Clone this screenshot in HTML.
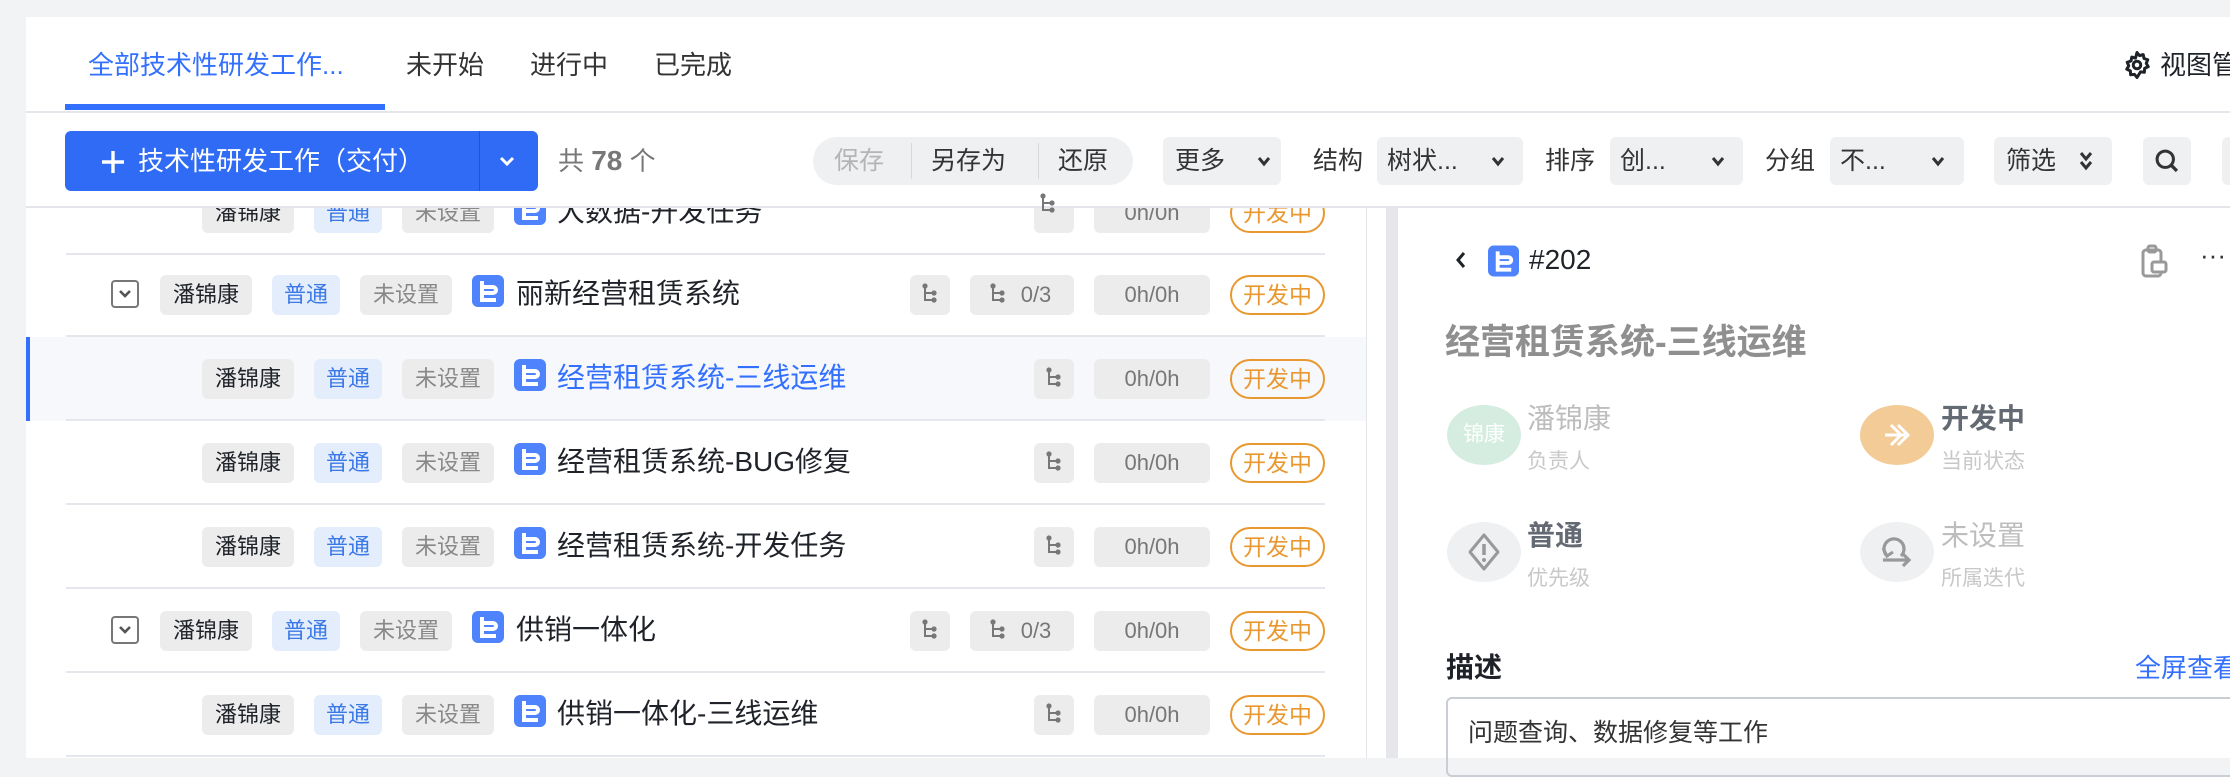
<!DOCTYPE html>
<html><head><meta charset="utf-8">
<style>
*{margin:0;padding:0;box-sizing:border-box}
body{width:2230px;height:758px;overflow:hidden;background:#f2f3f5;font-family:"Liberation Sans","Noto Sans CJK SC",sans-serif;color:#1f2329;position:relative}
.a{position:absolute;white-space:nowrap}
.card{left:26px;top:17px;width:2204px;height:741px;background:#fff}
.tab{top:46px;font-size:26px;color:#333;line-height:38px}
.box{background:#eff0f2;border-radius:6px;height:48px;top:137px;font-size:25px;line-height:48px;color:#333}
.lbl{top:137px;line-height:48px;font-size:25px;color:#333}
.row{left:26px;width:1340px;height:84px}
.sep{position:absolute;left:40px;right:41px;bottom:0;height:2px;background:#e5e6eb}
.tag{position:absolute;top:22px;height:40px;line-height:40px;border-radius:6px;font-size:22px;text-align:center}
.n{background:#ececec;color:#1f2329;width:92px}
.p{background:#e3edfb;color:#3b78e7;width:68px}
.u{background:#ececec;color:#888;width:92px}
.ic{position:absolute;top:22px;width:32px;height:32px}
.tt{position:absolute;top:19px;font-size:28px;line-height:44px;color:#1f2329;white-space:nowrap}
.g{position:absolute;top:22px;height:40px;background:#ececec;border-radius:6px;color:#777;font-size:22px;line-height:40px;text-align:center}
.st{position:absolute;top:22px;left:1204px;width:95px;height:40px;border:2px solid #e9982f;border-radius:20px;color:#e9982f;font-size:23px;line-height:36px;text-align:center}
.chev{position:absolute;top:153px}
</style></head><body>
<div class="a card"></div>
<div class="a tab" style="left:88px;color:#3370ff">全部技术性研发工作...</div>
<div class="a tab" style="left:406px">未开始</div>
<div class="a tab" style="left:530px">进行中</div>
<div class="a tab" style="left:654px">已完成</div>
<div class="a" style="left:65px;top:104px;width:320px;height:6px;background:#3370ff"></div>
<div class="a" style="left:26px;top:111px;width:2204px;height:2px;background:#e5e6eb"></div>
<svg class="a" style="left:2122px;top:50px" width="30" height="30" viewBox="0 0 24 24"><path d="M12 2l2 2.5 3-.8.6 3.1 3 1-1.2 2.9 1.6 2.6-2.9 1.4-.2 3.1-3.1-.3L12 22l-2-2.5-3.1.3-.2-3.1-2.9-1.4 1.6-2.6-1.2-2.9 3-1 .6-3.1 3 .8z" fill="none" stroke="#1f2329" stroke-width="2.4" stroke-linejoin="round"/><circle cx="12" cy="12" r="3" fill="none" stroke="#1f2329" stroke-width="2.4"/></svg>
<div class="a tab" style="left:2160px;color:#1f2329">视图管理</div>
<!-- toolbar -->
<div class="a" style="left:65px;top:131px;width:473px;height:60px;background:#2f6bf5;border-radius:6px"></div>
<div class="a" style="left:479px;top:131px;width:1px;height:60px;background:#1f55d0"></div>
<svg class="a" style="left:100px;top:149px" width="26" height="26" viewBox="0 0 26 26"><path d="M13 2v22M2 13h22" stroke="#fff" stroke-width="3.4"/></svg>
<div class="a" style="left:138px;top:131px;line-height:60px;color:#fff;font-size:26px">技术性研发工作（交付）</div>
<svg class="a" style="left:498px;top:152px" width="18" height="18" viewBox="0 0 18 18"><path d="M3 6l6 6 6-6" fill="none" stroke="#fff" stroke-width="3"/></svg>
<div class="a" style="left:558px;top:137px;line-height:48px;font-size:26px;color:#777">共 <span style="font-size:28px;font-weight:bold">78</span> 个</div>
<div class="a" style="left:813px;top:137px;width:320px;height:48px;background:#eff0f2;border-radius:24px"></div>
<div class="a lbl" style="left:834px;color:#b5b5b5">保存</div>
<div class="a" style="left:911px;top:143px;width:1px;height:36px;background:#d8d8d8"></div>
<div class="a lbl" style="left:931px">另存为</div>
<div class="a" style="left:1038px;top:143px;width:1px;height:36px;background:#d8d8d8"></div>
<div class="a lbl" style="left:1058px">还原</div>
<div class="a box" style="left:1163px;width:118px;padding-left:12px">更多</div>
<svg class="chev" style="left:1256px" width="16" height="16" viewBox="0 0 16 16"><path d="M3 5l5 6 5-6" fill="none" stroke="#333" stroke-width="3"/></svg>
<div class="a lbl" style="left:1313px">结构</div>
<div class="a box" style="left:1377px;width:146px;padding-left:10px">树状...</div>
<svg class="chev" style="left:1490px" width="16" height="16" viewBox="0 0 16 16"><path d="M3 5l5 6 5-6" fill="none" stroke="#333" stroke-width="3"/></svg>
<div class="a lbl" style="left:1545px">排序</div>
<div class="a box" style="left:1610px;width:133px;padding-left:10px">创...</div>
<svg class="chev" style="left:1710px" width="16" height="16" viewBox="0 0 16 16"><path d="M3 5l5 6 5-6" fill="none" stroke="#333" stroke-width="3"/></svg>
<div class="a lbl" style="left:1765px">分组</div>
<div class="a box" style="left:1830px;width:134px;padding-left:10px">不...</div>
<svg class="chev" style="left:1930px" width="16" height="16" viewBox="0 0 16 16"><path d="M3 5l5 6 5-6" fill="none" stroke="#333" stroke-width="3"/></svg>
<div class="a box" style="left:1994px;width:118px;padding-left:12px">筛选</div>
<svg class="a" style="left:2078px;top:149px" width="16" height="24" viewBox="0 0 16 24"><path d="M3 4l5 6 5-6M3 13l5 6 5-6" fill="none" stroke="#333" stroke-width="3"/></svg>
<div class="a box" style="left:2143px;width:48px"></div>
<svg class="a" style="left:2153px;top:147px" width="28" height="28" viewBox="0 0 24 24"><circle cx="10.5" cy="10.5" r="7" fill="none" stroke="#333" stroke-width="2.6"/><path d="M15.5 15.5l5 5" stroke="#333" stroke-width="2.8"/></svg>
<div class="a box" style="left:2222px;width:30px"></div>
<div class="a" style="left:26px;top:206px;width:2204px;height:2px;background:#e5e6eb"></div>

<!-- list -->
<div class="a" style="left:0;top:208px;width:1366px;height:550px;overflow:hidden">
<div class="a" style="left:26px;top:0;width:1340px;height:550px;background:#fff"></div>
<div class="a row" style="top:-37px"><div class="sep"></div>
 <div class="tag n" style="left:176px">潘锦康</div><div class="tag p" style="left:288px">普通</div><div class="tag u" style="left:376px">未设置</div>
 <svg class="ic" style="left:488px" viewBox="0 0 32 32"><rect width="32" height="32" rx="6" fill="#4e83fd"/><path d="M10 6v19h14M10 12h11a3 3 0 010 6H10" fill="none" stroke="#fff" stroke-width="4"/></svg>
 <div class="tt" style="left:531px">大数据-开发任务</div>
 <div class="g" style="left:1008px;width:40px"></div><div class="g" style="left:1068px;width:116px">0h/0h</div><div class="st">开发中</div>
</div>
<div class="a row" style="top:45px"><div class="sep"></div>
 <div class="a" style="left:85px;top:27px;width:28px;height:28px;border:2px solid #777;border-radius:4px"></div>
 <svg class="a" style="left:91px;top:34px" width="16" height="14" viewBox="0 0 16 14"><path d="M3 4l5 5 5-5" fill="none" stroke="#555" stroke-width="2.6"/></svg>
 <div class="tag n" style="left:134px">潘锦康</div><div class="tag p" style="left:246px">普通</div><div class="tag u" style="left:334px">未设置</div>
 <svg class="ic" style="left:446px" viewBox="0 0 32 32"><rect width="32" height="32" rx="6" fill="#4e83fd"/><path d="M10 6v19h14M10 12h11a3 3 0 010 6H10" fill="none" stroke="#fff" stroke-width="4"/></svg>
 <div class="tt" style="left:490px">丽新经营租赁系统</div>
 <div class="g" style="left:884px;width:40px"></div><div class="g" style="left:944px;width:104px;padding-left:28px">0/3</div><div class="g" style="left:1068px;width:116px">0h/0h</div><div class="st">开发中</div>
</div>
<div class="a row" style="top:129px;background:#f7f8fc"><div class="sep"></div>
 <div class="a" style="left:0;top:0;width:4px;height:84px;background:#3370ff"></div>
 <div class="tag n" style="left:176px">潘锦康</div><div class="tag p" style="left:288px">普通</div><div class="tag u" style="left:376px">未设置</div>
 <svg class="ic" style="left:488px" viewBox="0 0 32 32"><rect width="32" height="32" rx="6" fill="#4e83fd"/><path d="M10 6v19h14M10 12h11a3 3 0 010 6H10" fill="none" stroke="#fff" stroke-width="4"/></svg>
 <div class="tt" style="left:531px;color:#3370ff">经营租赁系统-三线运维</div>
 <div class="g" style="left:1008px;width:40px"></div><div class="g" style="left:1068px;width:116px">0h/0h</div><div class="st">开发中</div>
</div>
<div class="a row" style="top:213px"><div class="sep"></div>
 <div class="tag n" style="left:176px">潘锦康</div><div class="tag p" style="left:288px">普通</div><div class="tag u" style="left:376px">未设置</div>
 <svg class="ic" style="left:488px" viewBox="0 0 32 32"><rect width="32" height="32" rx="6" fill="#4e83fd"/><path d="M10 6v19h14M10 12h11a3 3 0 010 6H10" fill="none" stroke="#fff" stroke-width="4"/></svg>
 <div class="tt" style="left:531px">经营租赁系统-BUG修复</div>
 <div class="g" style="left:1008px;width:40px"></div><div class="g" style="left:1068px;width:116px">0h/0h</div><div class="st">开发中</div>
</div>
<div class="a row" style="top:297px"><div class="sep"></div>
 <div class="tag n" style="left:176px">潘锦康</div><div class="tag p" style="left:288px">普通</div><div class="tag u" style="left:376px">未设置</div>
 <svg class="ic" style="left:488px" viewBox="0 0 32 32"><rect width="32" height="32" rx="6" fill="#4e83fd"/><path d="M10 6v19h14M10 12h11a3 3 0 010 6H10" fill="none" stroke="#fff" stroke-width="4"/></svg>
 <div class="tt" style="left:531px">经营租赁系统-开发任务</div>
 <div class="g" style="left:1008px;width:40px"></div><div class="g" style="left:1068px;width:116px">0h/0h</div><div class="st">开发中</div>
</div>
<div class="a row" style="top:381px"><div class="sep"></div>
 <div class="a" style="left:85px;top:27px;width:28px;height:28px;border:2px solid #777;border-radius:4px"></div>
 <svg class="a" style="left:91px;top:34px" width="16" height="14" viewBox="0 0 16 14"><path d="M3 4l5 5 5-5" fill="none" stroke="#555" stroke-width="2.6"/></svg>
 <div class="tag n" style="left:134px">潘锦康</div><div class="tag p" style="left:246px">普通</div><div class="tag u" style="left:334px">未设置</div>
 <svg class="ic" style="left:446px" viewBox="0 0 32 32"><rect width="32" height="32" rx="6" fill="#4e83fd"/><path d="M10 6v19h14M10 12h11a3 3 0 010 6H10" fill="none" stroke="#fff" stroke-width="4"/></svg>
 <div class="tt" style="left:490px">供销一体化</div>
 <div class="g" style="left:884px;width:40px"></div><div class="g" style="left:944px;width:104px;padding-left:28px">0/3</div><div class="g" style="left:1068px;width:116px">0h/0h</div><div class="st">开发中</div>
</div>
<div class="a row" style="top:465px"><div class="sep"></div>
 <div class="tag n" style="left:176px">潘锦康</div><div class="tag p" style="left:288px">普通</div><div class="tag u" style="left:376px">未设置</div>
 <svg class="ic" style="left:488px" viewBox="0 0 32 32"><rect width="32" height="32" rx="6" fill="#4e83fd"/><path d="M10 6v19h14M10 12h11a3 3 0 010 6H10" fill="none" stroke="#fff" stroke-width="4"/></svg>
 <div class="tt" style="left:531px">供销一体化-三线运维</div>
 <div class="g" style="left:1008px;width:40px"></div><div class="g" style="left:1068px;width:116px">0h/0h</div><div class="st">开发中</div>
</div>
</div>
<svg width="0" height="0" style="position:absolute"><defs><g id="tr"><circle cx="3" cy="3" r="2.6" fill="#777"/><path d="M3 3v14h8M3 10h8" fill="none" stroke="#777" stroke-width="2"/><circle cx="12" cy="10" r="2.6" fill="#777"/><circle cx="12" cy="17" r="2.6" fill="#777"/></g></defs></svg>
<svg class="a" style="left:1040px;top:193px" width="16" height="22"><use href="#tr"/></svg>
<svg class="a" style="left:922px;top:283px" width="16" height="22"><use href="#tr"/></svg>
<svg class="a" style="left:990px;top:283px" width="16" height="22"><use href="#tr"/></svg>
<svg class="a" style="left:1046px;top:367px" width="16" height="22"><use href="#tr"/></svg>
<svg class="a" style="left:1046px;top:451px" width="16" height="22"><use href="#tr"/></svg>
<svg class="a" style="left:1046px;top:535px" width="16" height="22"><use href="#tr"/></svg>
<svg class="a" style="left:922px;top:619px" width="16" height="22"><use href="#tr"/></svg>
<svg class="a" style="left:990px;top:619px" width="16" height="22"><use href="#tr"/></svg>
<svg class="a" style="left:1046px;top:703px" width="16" height="22"><use href="#tr"/></svg>

<div class="a" style="left:1366px;top:208px;width:1px;height:550px;background:#e5e6eb"></div>
<div class="a" style="left:1386px;top:208px;width:12px;height:550px;background:#e6e7eb"></div>

<!-- right panel -->
<svg class="a" style="left:1454px;top:249px" width="14" height="22" viewBox="0 0 14 22"><path d="M10 4l-6 7 6 7" fill="none" stroke="#1f2329" stroke-width="3"/></svg>
<svg class="a" style="left:1488px;top:245px" width="31" height="32" viewBox="0 0 32 32"><rect width="32" height="32" rx="6" fill="#4e83fd"/><path d="M10 6v19h14M10 12h11a3 3 0 010 6H10" fill="none" stroke="#fff" stroke-width="4"/></svg>
<div class="a" style="left:1529px;top:241px;font-size:28px;line-height:38px;color:#1f2329">#202</div>
<svg class="a" style="left:2140px;top:244px" width="32" height="34" viewBox="0 0 32 34"><rect x="3" y="6" width="18" height="26" rx="3" fill="none" stroke="#999" stroke-width="3"/><rect x="8" y="2" width="8" height="6" rx="2" fill="none" stroke="#999" stroke-width="3"/><rect x="12" y="18" width="14" height="10" rx="2" fill="#fff" stroke="#999" stroke-width="3"/></svg>
<div class="a" style="left:2200px;top:240px;font-size:26px;color:#333">···</div>
<div class="a" style="left:1445px;top:320px;font-size:35px;line-height:46px;color:#8f8f8f;font-weight:bold">经营租赁系统-三线运维</div>

<div class="a" style="left:1447px;top:405px;width:74px;height:60px;border-radius:50%;background:#d5ede0;color:#fff;font-size:21px;line-height:60px;text-align:center">锦康</div>
<div class="a" style="left:1527px;top:397px;font-size:28px;color:#bdbdbd">潘锦康</div>
<div class="a" style="left:1527px;top:445px;font-size:21px;color:#c8c8c8">负责人</div>
<div class="a" style="left:1860px;top:405px;width:74px;height:60px;border-radius:50%;background:#f3cb97"></div>
<svg class="a" style="left:1882px;top:420px" width="30" height="30" viewBox="0 0 30 30"><path d="M3 15h20M9 5l10 10-10 10M16 5l10 10-10 10" fill="none" stroke="#fff" stroke-width="3"/></svg>
<div class="a" style="left:1941px;top:397px;font-size:28px;color:#646a73;font-weight:bold">开发中</div>
<div class="a" style="left:1941px;top:445px;font-size:21px;color:#c8c8c8">当前状态</div>

<div class="a" style="left:1447px;top:522px;width:74px;height:60px;border-radius:50%;background:#eff0f2"></div>
<svg class="a" style="left:1466px;top:532px" width="36" height="40" viewBox="0 0 36 40"><path d="M18 3l14 17-14 17L4 20z" fill="none" stroke="#999" stroke-width="3" stroke-linejoin="round"/><path d="M18 12v11" stroke="#999" stroke-width="3.5"/><circle cx="18" cy="28" r="2" fill="#999"/></svg>
<div class="a" style="left:1527px;top:514px;font-size:28px;color:#646a73;font-weight:bold">普通</div>
<div class="a" style="left:1527px;top:562px;font-size:21px;color:#c8c8c8">优先级</div>
<div class="a" style="left:1860px;top:522px;width:74px;height:60px;border-radius:50%;background:#eff0f2"></div>
<svg class="a" style="left:1879px;top:534px" width="36" height="36" viewBox="0 0 36 36"><path d="M8 22a10 10 0 1 1 14 0M4 26h24M24 20l6 6-6 6" fill="none" stroke="#999" stroke-width="3.2"/><path d="M4 14l4 8 6-4" fill="none" stroke="#999" stroke-width="3"/></svg>
<div class="a" style="left:1941px;top:514px;font-size:28px;color:#bdbdbd">未设置</div>
<div class="a" style="left:1941px;top:562px;font-size:21px;color:#c8c8c8">所属迭代</div>

<div class="a" style="left:1446px;top:646px;font-size:28px;font-weight:bold;color:#1f2329">描述</div>
<div class="a" style="left:2135px;top:648px;font-size:26px;color:#3370ff">全屏查看</div>
<div class="a" style="left:1446px;top:697px;width:800px;height:80px;border:2px solid #c9cdd4;border-radius:6px"></div>
<div class="a" style="left:1468px;top:713px;font-size:25px;color:#333">问题查询、数据修复等工作</div>
</body></html>
